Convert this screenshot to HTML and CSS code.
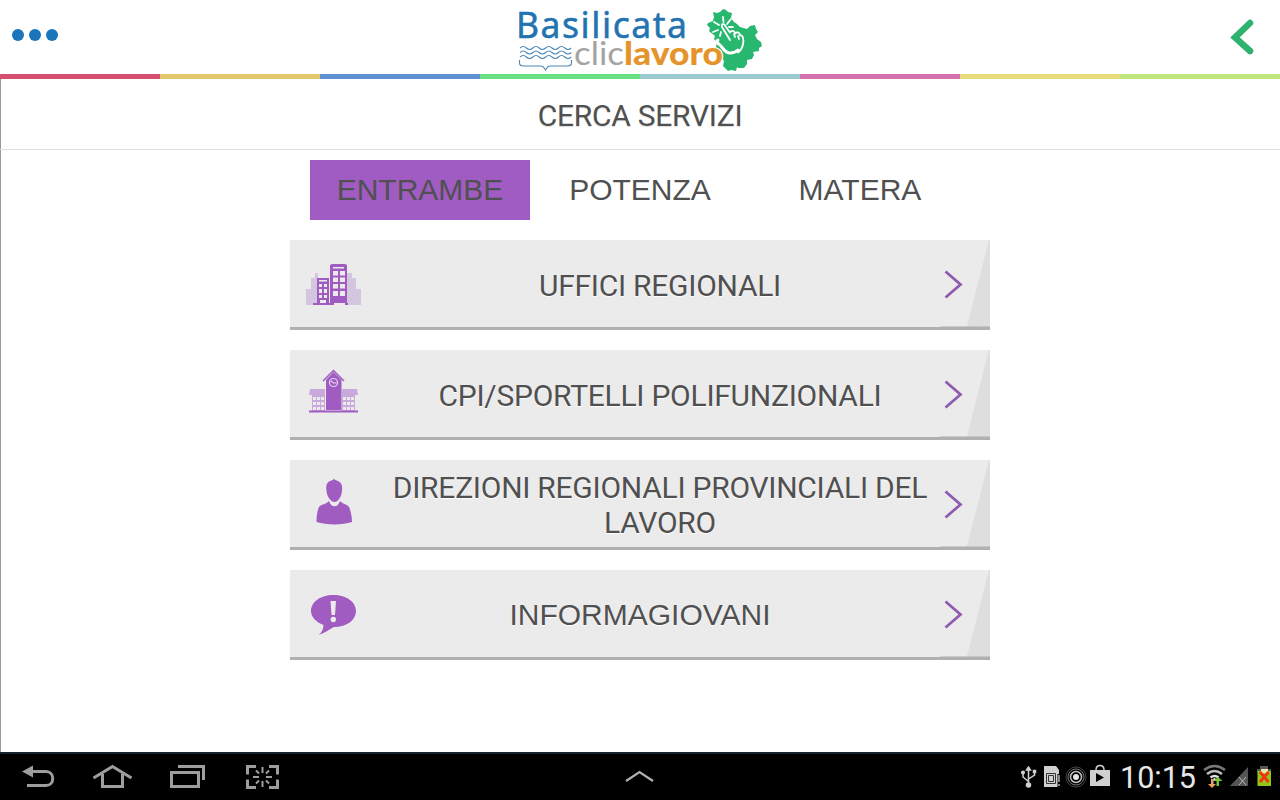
FILE: index.html
```
<!DOCTYPE html>
<html lang="it">
<head>
  <meta charset="UTF-8" />
  <meta name="viewport" content="width=device-width, initial-scale=1.0" />
  <title>Basilicata Cliclavoro - Cerca servizi</title>
  <link rel="stylesheet" href="styles.css">
</head>
<body>
  <header class="header">
    <button class="menu" aria-label="Menu">
      <span class="dot"></span><span class="dot"></span><span class="dot"></span>
    </button>
    <svg class="logo" width="250" height="74" viewBox="515 0 250 74">
      <!-- region shape -->
      <path fill="#27b76e" d="M713 12l4 1l3-1l3-3l3 1l2 2l4 1l-1 5l3 4l3 2l3 3l7 2l3-3l5-1l1 4l2 3l-3 3l2 4l4 3l1 4l-3 2l0 3l-6 1l1 3l-2 4l-5 1l0 4l-3 4l-6 0l-1-1l-1 4l-5-1l-3 1l-3-3l-2-2l1-5l-4-5l1-5l-5-4l1-5l-3-3l1-3l-6-5l1-3l-3-3l1-2l5-2l1-4z"/>
      <!-- hand and click rays -->
      <g fill="none" stroke="#fff" stroke-width="1.800" stroke-linecap="round" stroke-linejoin="round">
        <path d="M723 17l.5 5M714 22l5 3M713 32l5-2M720 36l1-4M731 19l-4 5M733 27l-4 0"/>
        <path d="M730 40l-8-13c-1-3 2-4 3-1.500l5 7c2-3 5-1 5 1c2-2 5-1 5 2c3-1 4 4 3 9c-1 4-2 6-5 8M734 34l1 3M738 36l1 3"/>
        <path stroke-width="3" d="M718 40c-2 1 0 4 2 5c3 3 5 8 10 8c4 0 6-1 8-3"/>
      </g>
      <text class="logo-name" x="516" y="38" textLength="171">Basilicata</text>
      <g fill="none" stroke="#4b86b4" stroke-width="1.100">
        <path d="M520 48q3.200-3 6.400 0t6.400 0t6.400 0t6.400 0t6.400 0t6.400 0t6.400 0t6.400 0"/>
        <path d="M520 52.500q3.200-3 6.400 0t6.400 0t6.400 0t6.400 0t6.400 0t6.400 0t6.400 0t6.400 0"/>
        <path d="M520 57q3.200-3 6.400 0t6.400 0t6.400 0t6.400 0t6.400 0t6.400 0t6.400 0t6.400 0"/>
        <path d="M519.500 60v3q0 3 4 3h17q3 0 5 4q2-4 5-4h17q4 0 4-3v-3"/>
      </g>
      <text class="logo-clic" x="574" y="65" textLength="50" lengthAdjust="spacingAndGlyphs">clic</text>
      <text class="logo-lavoro" x="624" y="65" textLength="99" lengthAdjust="spacingAndGlyphs">lavoro</text>
    </svg>
    <button class="back" aria-label="Indietro">
      <svg width="28" height="40" viewBox="0 0 28 40">
        <path d="M22 6L7 20.500L22 34" fill="none" stroke="#2db36f" stroke-width="6.500" stroke-linecap="round"/>
      </svg>
    </button>
  </header>

  <div class="stripes">
    <span class="red"></span>
    <span class="gold"></span>
    <span class="blue"></span>
    <span class="green"></span>
    <span class="teal"></span>
    <span class="pink"></span>
    <span class="yellow"></span>
    <span class="lime"></span>
  </div>

  <main class="page">
    <h1 class="title">CERCA SERVIZI</h1>

    <div class="tabs">
      <a class="tab active">ENTRAMBE</a>
      <a class="tab">POTENZA</a>
      <a class="tab">MATERA</a>
    </div>

    <div class="list">
      <a class="item">
        <svg class="icon" width="90" height="87" viewBox="0 0 90 87">
          <path fill="#d5c6df" d="M16 49h5V38h4v-5h3v5h5v27H16zM57 33h5v5h4v11h5v16H57z"/>
          <path fill="#a05cc0" d="M40 25l2-1h13l2 1v38h1v2H23v-2h4V38h12v25h1z"/>
          <path fill="#ebebeb" d="M39 38h1v25h-1zM43 27h11v1.500H43zM43 31h5v4.500h-5zM50 31h5v4.500h-5zM43 37.500h5v4.500h-5zM50 37.500h5v4.500h-5zM43 44h5v4.500h-5zM50 44h5v4.500h-5zM43 51h5v5h-5zM50 51h5v5h-5zM44 63h11v2H44zM29 40h8v1.500h-8zM29 44h3v3h-3zM34 44h3v3h-3zM29 49h3v4h-3zM34 49h3v4h-3zM29 55h3v3h-3zM34 55h3v3h-3zM30 60h6v3h-6z"/>
        </svg>
        <span class="label">UFFICI REGIONALI</span>
        <svg class="arrow" width="50" height="90" viewBox="0 0 50 90">
          <path d="M49 0h1v90H26z" fill="#dedede"/>
          <path d="M0 86.500h50V90H0z" fill="#b0b0b0"/>
          <path d="M5.500 31.500L20.500 44.500L5.500 57.500" fill="none" stroke="#8e5bb0" stroke-width="2.800"/>
        </svg>
      </a>
      <a class="item">
        <svg class="icon" width="90" height="87" viewBox="0 0 90 87">
          <path fill="#c9a8dc" d="M20 39h15v6H19zM52 39h15l1 6H52zM22 45h13v17H22zM52 45h13v17H52z"/>
          <path fill="#ebebeb" d="M23 47h3v3h-3zM27 47h3v3h-3zM31 47h3v3h-3zM23 52h3v3h-3zM27 52h3v3h-3zM31 52h3v3h-3zM23 57h3v3h-3zM27 57h3v3h-3zM31 57h3v3h-3zM53 47h3v3h-3zM57 47h3v3h-3zM61 47h3v3h-3zM53 52h3v3h-3zM57 52h3v3h-3zM61 52h3v3h-3zM53 57h3v3h-3zM57 57h3v3h-3zM61 57h3v3h-3z"/>
          <path fill="#a05cc0" d="M43.500 22L51.500 30V60H36V30zM19 60.500h49v2H19z"/>
          <path fill="none" stroke="#a05cc0" stroke-width="1.500" d="M33 31L43.500 20.500L54 31"/>
          <circle cx="43.500" cy="32.500" r="4" fill="none" stroke="#e6d2f0" stroke-width="1.200"/>
          <path fill="none" stroke="#e6d2f0" stroke-width="1.200" d="M41 31l2.500 2h3"/>
        </svg>
        <span class="label">CPI/SPORTELLI POLIFUNZIONALI</span>
        <svg class="arrow" width="50" height="90" viewBox="0 0 50 90">
          <path d="M49 0h1v90H26z" fill="#dedede"/>
          <path d="M0 86.500h50V90H0z" fill="#b0b0b0"/>
          <path d="M5.500 31.500L20.500 44.500L5.500 57.500" fill="none" stroke="#8e5bb0" stroke-width="2.800"/>
        </svg>
      </a>
      <a class="item">
        <svg class="icon" width="90" height="87" viewBox="0 0 90 87">
          <path fill="#a05cc0" d="M44 18.500c.5 1.500 2 1.500 4 2.500c4 2 4.500 5 4 10c-.5 6-4 11-7.500 11s-7.500-5-8-11c-.5-5-.5-8 3.500-10c2-1 3.500-1 4-2.500z"/>
          <path fill="#a05cc0" d="M39 41c2 7 9 7 11 0c4 4 8 3 9.500 7c1.500 4 2.500 9 2.500 14c-10 3.300-25 3.300-35.500 0c0-5 .5-10 2-14c1.500-4 7-3 10.500-7z"/>
        </svg>
        <span class="label">DIREZIONI REGIONALI PROVINCIALI DEL LAVORO</span>
        <svg class="arrow" width="50" height="90" viewBox="0 0 50 90">
          <path d="M49 0h1v90H26z" fill="#dedede"/>
          <path d="M0 86.500h50V90H0z" fill="#b0b0b0"/>
          <path d="M5.500 31.500L20.500 44.500L5.500 57.500" fill="none" stroke="#8e5bb0" stroke-width="2.800"/>
        </svg>
      </a>
      <a class="item">
        <svg class="icon" width="90" height="87" viewBox="0 0 90 87">
          <path fill="#a05cc0" d="M43.500 25c13 0 22.500 7 22.500 16s-9 16-22 16c-5 2.500-9 6-15.500 8c3-2 5-6 5-10C26 52 21 47 21 41c0-9 9.500-16 22.500-16z"/>
          <path fill="#ebebeb" d="M40.500 31h5.500l-1 14h-3.500z"/>
          <circle cx="43.300" cy="49.500" r="2.700" fill="#ebebeb"/>
        </svg>
        <span class="label arial">INFORMAGIOVANI</span>
        <svg class="arrow" width="50" height="90" viewBox="0 0 50 90">
          <path d="M49 0h1v90H26z" fill="#dedede"/>
          <path d="M0 86.500h50V90H0z" fill="#b0b0b0"/>
          <path d="M5.500 31.500L20.500 44.500L5.500 57.500" fill="none" stroke="#8e5bb0" stroke-width="2.800"/>
        </svg>
      </a>
    </div>
  </main>

  <footer class="navbar">
    <!-- back, home, recent apps, screenshot -->
    <svg width="300" height="46" viewBox="0 754 300 46" fill="none" stroke="#a09e9c" stroke-width="3">
      <path d="M31 771.500h15c9 0 9 14 0 14H27"/>
      <path d="M22 771.500l11-6v12z" fill="#a09e9c" stroke="none"/>
      <path d="M93.500 778l19-11.500l19 11.500M102.500 774v12.500h20V774"/>
      <path d="M171.500 772.500h27v14h-27zM178 766.500h25.500V780"/>
      <path d="M256 766.500h-8.500v8M269 766.500h8.500v8M256 787.500h-8.500v-8M269 787.500h8.500v-8"/>
      <path stroke-width="2" d="M262.500 767v6M262.500 781v6M253 777h6M266 777h6M256 770.500l3 3M269 770.500l-3 3M256 783.500l3-3M269 783.500l-3-3"/>
    </svg>
    <svg width="32" height="46" viewBox="624 754 32 46">
      <path d="M626 781l13.500-9l13.500 9" fill="none" stroke="#b0b0b0" stroke-width="2.200"/>
    </svg>
    <div class="status">
      <!-- usb, sim, hotspot, store -->
      <svg width="92" height="46" viewBox="1020 754 92 46">
        <g fill="none" stroke="#d0d2d0" stroke-width="1.500">
          <path d="M1028.500 769v15M1023 773v4l5.500 4.500M1034.500 771v4l-6 4"/>
          <circle cx="1028.500" cy="785" r="2" fill="#d0d2d0"/>
          <circle cx="1023" cy="772.500" r="1.300" fill="#d0d2d0"/>
          <path fill="#d0d2d0" d="M1026.500 770l2-3l2 3zM1033.500 770.500h2v2h-2z"/>
        </g>
        <path fill="#cfd1cf" d="M1044 766h12l3 4v17h-15z"/>
        <path fill="none" stroke="#333" d="M1046.500 773.500h9v10h-9zM1048.500 775.500h5v6h-5z"/>
        <path stroke="#000" stroke-width="3" d="M1059 774v14"/>
        <path stroke="#cfd1cf" stroke-width="1.300" d="M1059 775v7M1059 784v2"/>
        <circle cx="1076" cy="777" r="3" fill="#e5e5e5"/>
        <g fill="none">
          <circle cx="1076" cy="777" r="5.500" stroke="#c0c0c0" stroke-width="1.500"/>
          <circle cx="1076" cy="777" r="8" stroke="#777"/>
          <circle cx="1076" cy="777" r="10" stroke="#444"/>
        </g>
        <path fill="#cfd1cf" d="M1090 770h20v16h-20z"/>
        <path d="M1096 770c0-6 8-6 8 0" fill="none" stroke="#cfd1cf" stroke-width="1.500"/>
        <path d="M1096 773l8 4.500l-8 4.500z"/>
      </svg>
      <span class="clock">10:15</span>
      <!-- wifi, signal, battery -->
      <svg width="74" height="46" viewBox="1200 754 74 46">
        <g fill="none" stroke-width="2.600">
          <path stroke="#777" d="M1204 770q10.500-8 21 0"/>
          <path stroke="#bbb" d="M1207 774q7.500-6 15 0"/>
          <path stroke="#ddd" d="M1210.500 777.500q4-3 8 0"/>
        </g>
        <circle cx="1214.500" cy="779.500" r="1.500" fill="#ddd"/>
        <path fill="#e9a05a" d="M1211 779h2.500v5h2.500l-4 4l-4-4h3z"/>
        <path fill="#71c43a" d="M1216.500 786v-5h-3l4.500-4l4.500 4h-3.500v5z"/>
        <path fill="#555" d="M1248 767v19h-18z"/>
        <path stroke="#bbb" d="M1239 777l7 8M1246 777l-7 8"/>
        <path fill="#555" d="M1260 766h8v3h3v4h-14v-4h3z"/>
        <path fill="#93c715" d="M1257.500 771h13.500v15h-13.500z"/>
        <path fill="#f2e6b0" d="M1261 769h7v4h-7z"/>
        <path stroke="#ee3418" stroke-width="2.800" d="M1260 772l8.500 10M1268.500 772l-8.500 10"/>
      </svg>
    </div>
  </footer>
</body>
</html>
```

FILE: styles.css
```
* {
  box-sizing: border-box;
}
body {
  margin: 0;
  height: 100vh;
  display: flex;
  flex-direction: column;
  overflow: hidden;
  background-color: #fff;
  font-family: Roboto, sans-serif;
  color: #505050;
}
button {
  background: none;
  border: none;
  padding: 0;
}
svg {
  display: block;
  flex: none;
}

/* Header */
.header {
  height: 74px;
  display: grid;
  grid-template-columns: 1fr 250px 1fr;
  align-items: center;
}
.menu {
  display: flex;
  gap: 5px;
  padding: 0 12px;
  margin-top: -4px;
}
.dot {
  width: 12px;
  height: 12px;
  border-radius: 50%;
  background-color: #1a75bb;
}
.logo {
  overflow: visible;
}
.logo-name {
  font-family: "Noto Sans", sans-serif;
  font-size: 35.5px;
  fill: #2273b0;
  stroke: #2273b0;
  stroke-width: 0.5px;
}
.logo-clic {
  font-family: Lato, sans-serif;
  font-size: 33px;
  fill: #a3a3a3;
}
.logo-lavoro {
  font-family: Lato, sans-serif;
  font-size: 33px;
  font-weight: 900;
  fill: #e5942c;
  stroke: #fff;
  stroke-width: 2px;
  paint-order: stroke;
}
.back {
  justify-self: end;
  padding-right: 24px;
}

.stripes {
  height: 5px;
  display: grid;
  grid-template-columns: repeat(8, 1fr);
}
.red { background-color: #d5506f; }
.gold { background-color: #e5c76b; }
.blue { background-color: #5f92d2; }
.green { background-color: #66e080; }
.teal { background-color: #99cace; }
.pink { background-color: #d372ad; }
.yellow { background-color: #e8dc7c; }
.lime { background-color: #c0e57c; }

/* Page */
.page {
  flex: 1;
  border-left: 1px solid #999;
}
.title {
  height: 71px;
  margin: 0 0 10px -1px;
  padding-top: 2px;
  border-bottom: 1px solid #e0e0e0;
  font-size: 30px;
  font-weight: 400;
  line-height: 70px;
  letter-spacing: -0.27px;
  text-align: center;
  text-shadow: 0 1px 1px #ddd;
}
.tabs {
  display: grid;
  grid-template-columns: repeat(3, 220px);
  margin-left: 309px;
}
.tab {
  height: 60px;
  font-family: "Liberation Sans", sans-serif;
  font-size: 30px;
  line-height: 60px;
  text-align: center;
}
.active {
  background-color: #a05cc3;
}

/* Service list */
.list {
  width: 700px;
  margin: 20px 0 0 289px;
  display: flex;
  flex-direction: column;
  gap: 20px;
}
.item {
  height: 90px;
  display: flex;
  background-color: #ebebeb;
  box-shadow: inset 0 -3px #b0b0b0;
}
.label {
  flex: 1;
  align-self: center;
  font-size: 30px;
  line-height: 35px;
  letter-spacing: -0.26px;
  text-align: center;
  text-shadow: 0 1px 1px #fff;
}
.arial {
  padding: 0 40px 2px 0;
  font-family: "Liberation Sans", sans-serif;
  letter-spacing: 0;
}

/* Android bar */
.navbar {
  height: 48px;
  border-top: 2px solid #14232d;
  background-color: #000;
  display: grid;
  grid-template-columns: 1fr 32px 1fr;
}
.status {
  display: flex;
  justify-content: flex-end;
  padding-right: 6px;
}
.clock {
  width: 88px;
  padding-left: 4px;
  font-size: 30.5px;
  line-height: 47px;
  text-align: center;
  color: #e6e6e6;
}
```
